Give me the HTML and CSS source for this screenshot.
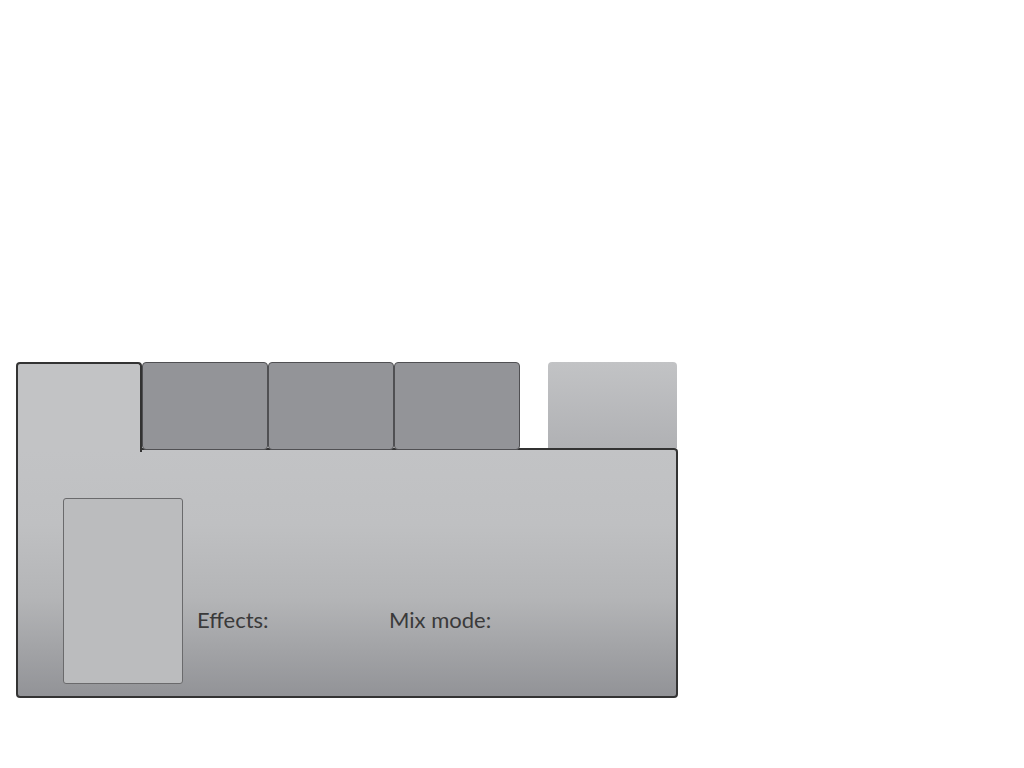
FILE: index.html
```html
<!DOCTYPE html>
<html lang="en">
<head>
    <meta charset="UTF-8">
    <title>Layer panel</title>
    <link rel="stylesheet" href="styles.css">
</head>
<body>
    <div class="panel">
        <div class="tab-row">
            <div class="tab active"></div>
            <div class="tab"></div>
            <div class="tab"></div>
            <div class="tab"></div>
            <div class="side-box"></div>
        </div>
        <div class="panel-body">
            <div class="preview"></div>
            <div class="label">Effects:</div>
            <div class="label">Mix mode:</div>
        </div>
    </div>
</body>
</html>
```

FILE: styles.css
```css
body {
    margin: 0;
    background: #fff;
    font-family: Lato, "Open Sans", sans-serif;
}
.panel {
    width: 662px;
    margin: 362px 0 0 16px;
}
.tab-row {
    display: flex;
    align-items: flex-start;
    height: 88px;
}
.tab {
    box-sizing: border-box;
    width: 126px;
    height: 88px;
    background: #939498;
    border: 1px solid #505053;
    border-radius: 4px;
}
.tab.active {
    background: #c2c3c5;
    border: 2px solid #333;
    border-bottom: none;
    border-radius: 4px 4px 0 0;
    height: 90px;
    position: relative;
    z-index: 1;
}
.side-box {
    width: 129px;
    height: 86px;
    margin-left: 28px;
    background: linear-gradient(#c2c3c5, #b0b1b4);
    border-radius: 4px 4px 0 0;
}
.panel-body {
    box-sizing: border-box;
    height: 250px;
    margin-top: -2px;
    border: 2px solid #333;
    border-radius: 0 4px 4px 4px;
    background: linear-gradient(#c2c3c5 0%, #bfc0c2 30%, #b4b5b7 60%, #929397 100%);
    display: flex;
    align-items: flex-start;
    padding: 48px 0 0 45px;
}
.preview {
    box-sizing: border-box;
    width: 120px;
    height: 186px;
    background: #bbbcbe;
    border: 1px solid #6a6a6c;
    border-radius: 3px;
}
.label {
    width: 192px;
    margin: 110px 0 0 14px;
    font-size: 22px;
    line-height: 24px;
    color: #3a3a3a;
}
.label + .label {
    margin-left: 0;
}
```
